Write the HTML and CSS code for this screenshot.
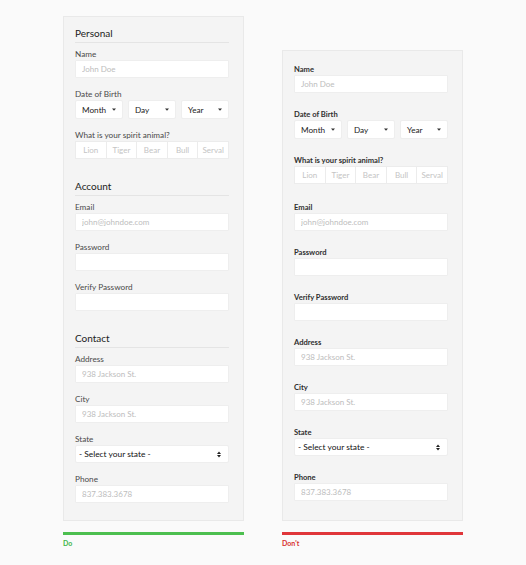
FILE: index.html
```html
<!DOCTYPE html>
<html lang="en">
<head>
<meta charset="utf-8">
<title>Form layout: Do / Don't</title>
<link rel="stylesheet" href="styles.css">
</head>
<body>
<main class="wrap">
  <div class="col">
    <form class="panel panel--do">
      <section class="section">
        <h2 class="section__title">Personal</h2>
        <div class="field"><label class="label">Name</label><input class="input" placeholder="John Doe"></div>
        <div class="field">
          <label class="label">Date of Birth</label>
          <div class="selects">
            <div class="select select--tall"><span>Month</span><svg class="caret" width="4" height="3" viewBox="0 0 4 3"><path d="M0 0.5h4L2 2.8z" fill="#333"/></svg></div>
            <div class="select select--tall"><span>Day</span><svg class="caret" width="4" height="3" viewBox="0 0 4 3"><path d="M0 0.5h4L2 2.8z" fill="#333"/></svg></div>
            <div class="select select--tall"><span>Year</span><svg class="caret" width="4" height="3" viewBox="0 0 4 3"><path d="M0 0.5h4L2 2.8z" fill="#333"/></svg></div>
          </div>
        </div>
        <div class="field">
          <label class="label">What is your spirit animal?</label>
          <div class="seg"><span>Lion</span><span>Tiger</span><span>Bear</span><span>Bull</span><span>Serval</span></div>
        </div>
      </section>
      <section class="section">
        <h2 class="section__title">Account</h2>
        <div class="field"><label class="label">Email</label><input class="input" placeholder="john@johndoe.com"></div>
        <div class="field"><label class="label">Password</label><input class="input" type="password"></div>
        <div class="field"><label class="label">Verify Password</label><input class="input" type="password"></div>
      </section>
      <section class="section">
        <h2 class="section__title">Contact</h2>
        <div class="field"><label class="label">Address</label><input class="input" placeholder="938 Jackson St."></div>
        <div class="field"><label class="label">City</label><input class="input" placeholder="938 Jackson St."></div>
        <div class="field">
          <label class="label">State</label>
          <div class="select select--state"><span>- Select your state -</span><svg class="updown" width="4" height="7" viewBox="0 0 4 7"><path d="M0 3h4L2 0.4zM0 4h4L2 6.6z" fill="#222"/></svg></div>
        </div>
        <div class="field"><label class="label">Phone</label><input class="input" placeholder="837.383.3678"></div>
      </section>
    </form>
    <div class="bar bar--do"></div>
    <div class="verdict verdict--do">Do</div>
  </div>

  <div class="col">
    <form class="panel panel--dont">
      <div class="field"><label class="label">Name</label><input class="input" placeholder="John Doe"></div>
      <div class="field">
        <label class="label">Date of Birth</label>
        <div class="selects">
          <div class="select select--tall"><span>Month</span><svg class="caret" width="4" height="3" viewBox="0 0 4 3"><path d="M0 0.5h4L2 2.8z" fill="#333"/></svg></div>
          <div class="select select--tall"><span>Day</span><svg class="caret" width="4" height="3" viewBox="0 0 4 3"><path d="M0 0.5h4L2 2.8z" fill="#333"/></svg></div>
          <div class="select select--tall"><span>Year</span><svg class="caret" width="4" height="3" viewBox="0 0 4 3"><path d="M0 0.5h4L2 2.8z" fill="#333"/></svg></div>
        </div>
      </div>
      <div class="field field--seg">
        <label class="label">What is your spirit animal?</label>
        <div class="seg"><span>Lion</span><span>Tiger</span><span>Bear</span><span>Bull</span><span>Serval</span></div>
      </div>
      <div class="field"><label class="label">Email</label><input class="input" placeholder="john@johndoe.com"></div>
      <div class="field"><label class="label">Password</label><input class="input" type="password"></div>
      <div class="field"><label class="label">Verify Password</label><input class="input" type="password"></div>
      <div class="field"><label class="label">Address</label><input class="input" placeholder="938 Jackson St."></div>
      <div class="field"><label class="label">City</label><input class="input" placeholder="938 Jackson St."></div>
      <div class="field">
        <label class="label">State</label>
        <div class="select select--state"><span>- Select your state -</span><svg class="updown" width="4" height="7" viewBox="0 0 4 7"><path d="M0 3h4L2 0.4zM0 4h4L2 6.6z" fill="#222"/></svg></div>
      </div>
      <div class="field"><label class="label">Phone</label><input class="input" placeholder="837.383.3678"></div>
    </form>
    <div class="bar bar--dont"></div>
    <div class="verdict verdict--dont">Don't</div>
  </div>
</main>
</body>
</html>
```

FILE: styles.css
```css
* { box-sizing: border-box; }

body {
  margin: 0;
  background: #fafafa;
  font-family: Lato, "Open Sans", sans-serif;
  color: #333;
}

.wrap {
  display: flex;
  justify-content: center;
  align-items: flex-end;
  gap: 38px;
  padding-top: 16px;
}

.col {
  width: 181px;
  display: flex;
  flex-direction: column;
}

.panel {
  margin: 0;
  background: #f4f4f4;
  border: 1px solid #e9e9e9;
  padding: 10px 14px 17px 11px;
}

.panel--dont {
  padding: 13px 14px 19px 11px;
}

.section + .section { margin-top: 21px; }

.section__title {
  margin: 0 0 6px;
  padding-bottom: 3px;
  border-bottom: 1px solid #e4e4e4;
  font-size: 10px;
  line-height: 12px;
  font-weight: 400;
  color: #222;
}

.field { margin-bottom: 11px; }
.field:last-child { margin-bottom: 0; }

.panel--dont .field { margin-bottom: 16px; }
.panel--dont .field--seg { margin-bottom: 18px; }
.panel--dont .field:last-child { margin-bottom: 0; }

.label {
  display: block;
  font-size: 8.2px;
  line-height: 10px;
  margin-bottom: 1px;
  color: #4a4a4a;
}

.panel--dont .label {
  font-size: 7.6px;
  font-weight: 700;
  color: #2e2e2e;
}

.input {
  display: block;
  width: 100%;
  height: 18px;
  margin: 0;
  padding: 0 6px;
  border: 1px solid #eeeeee;
  border-radius: 1px;
  background: #fff;
  font-family: Lato, "Open Sans", sans-serif;
  font-size: 8px;
  color: #333;
  outline: none;
}

.input::placeholder { color: #bdbdbd; }

.selects {
  display: flex;
  gap: 5px;
}

.select {
  flex: 1;
  display: flex;
  align-items: center;
  justify-content: space-between;
  height: 18px;
  padding: 0 6px;
  background: #fff;
  border: 1px solid #eeeeee;
  border-radius: 2px;
  font-size: 8.2px;
  color: #222;
}

.select--tall { height: 19px; }

.select--state {
  padding: 0 7px 0 3px;
  font-size: 8.4px;
  color: #111;
}

.caret, .updown { display: block; flex: none; }

.seg {
  display: flex;
  height: 18px;
  background: #fff;
  border: 1px solid #ececec;
}

.seg span {
  flex: 1;
  display: flex;
  align-items: center;
  justify-content: center;
  font-size: 8px;
  color: #c4c4c4;
}

.seg span + span { border-left: 1px solid #ececec; }

.bar {
  height: 3px;
  margin-top: 11px;
}

.bar--do { background: #4cbf4f; }
.bar--dont { background: #e0363a; }

.verdict {
  margin-top: 4px;
  font-size: 7px;
  line-height: 9px;
  font-weight: 700;
}

.verdict--do { color: #3fb548; }
.verdict--dont { color: #d8302f; }
```
